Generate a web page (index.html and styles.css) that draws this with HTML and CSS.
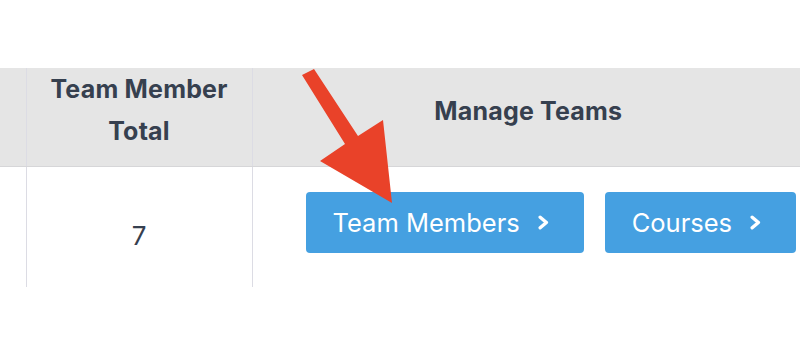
FILE: index.html
```html
<!DOCTYPE html>
<html lang="en">
<head>
<meta charset="utf-8">
<title>Manage Teams</title>
<link rel="stylesheet" href="styles.css">
</head>
<body>
<div class="page">
  <table class="teams">
    <colgroup>
      <col class="col-prev">
      <col class="col-total">
      <col class="col-manage">
    </colgroup>
    <thead>
      <tr>
        <th class="cell-prev"></th>
        <th class="head-total">Team Member<br>Total</th>
        <th class="head-manage">Manage Teams</th>
      </tr>
    </thead>
    <tbody>
      <tr>
        <td class="cell-prev"></td>
        <td class="total">7</td>
        <td class="manage">
          <div class="actions">
            <a class="btn" href="#">Team Members
              <svg class="chev" width="11" height="15" viewBox="0 0 11 15"><polyline points="2.2,2.2 8.4,7.5 2.2,12.8" fill="none" stroke="#fff" stroke-width="3.4" stroke-linecap="round" stroke-linejoin="round"/></svg>
            </a>
            <a class="btn" href="#">Courses
              <svg class="chev" width="11" height="15" viewBox="0 0 11 15"><polyline points="2.2,2.2 8.4,7.5 2.2,12.8" fill="none" stroke="#fff" stroke-width="3.4" stroke-linecap="round" stroke-linejoin="round"/></svg>
            </a>
          </div>
        </td>
      </tr>
    </tbody>
  </table>
  <svg class="arrow" width="800" height="356" viewBox="0 0 800 356">
    <polygon points="302,75 314,69 358,136 383,120 392,203 320,161 345,144" fill="#e94229"/>
  </svg>
</div>
</body>
</html>
```
FILE: styles.css
```css
html, body {
  margin: 0;
  padding: 0;
  background: #ffffff;
  overflow: hidden;
}
body {
  font-family: "Inter", "Noto Sans", sans-serif;
  color: #36404f;
}
.page {
  position: relative;
  width: 800px;
  height: 356px;
  padding-top: 68px;
  box-sizing: border-box;
}
.teams {
  border-collapse: collapse;
  table-layout: fixed;
  width: 804px;
}
.col-prev { width: 26px; }
.col-total { width: 226px; }
.col-manage { width: 552px; }
th {
  background: #e5e5e5;
  height: 98px;
  padding: 0;
  border-bottom: 1px solid #d6d6d8;
  border-left: 1px solid #dcdce4;
  font-size: 25px;
  font-weight: 700;
  letter-spacing: 0.2px;
  line-height: 42px;
  color: #36404f;
  text-align: center;
  vertical-align: top;
  box-sizing: border-box;
}
th.cell-prev { border-left: none; }
.head-total {
  padding-top: 0;
}
.head-manage {
  padding-top: 22px;
}
td {
  height: 121px;
  padding: 0;
  border-left: 1px solid #dcdce4;
  vertical-align: top;
  box-sizing: border-box;
}
td.cell-prev { border-left: none; }
.total {
  text-align: center;
  font-size: 26px;
  line-height: 30px;
  padding-top: 54px;
  color: #36404f;
}
.manage {
  padding-top: 25px;
}
.actions {
  display: flex;
  gap: 21px;
  padding-left: 53px;
}
.btn {
  display: inline-flex;
  align-items: center;
  gap: 18px;
  height: 61px;
  padding: 0 35px 0 27px;
  box-sizing: border-box;
  background: #45a0e1;
  color: #ffffff;
  border-radius: 4px;
  font-size: 25.5px;
  text-decoration: none;
  white-space: nowrap;
}
.chev { display: block; }
.arrow {
  position: absolute;
  left: 0;
  top: 0;
  pointer-events: none;
}
```
